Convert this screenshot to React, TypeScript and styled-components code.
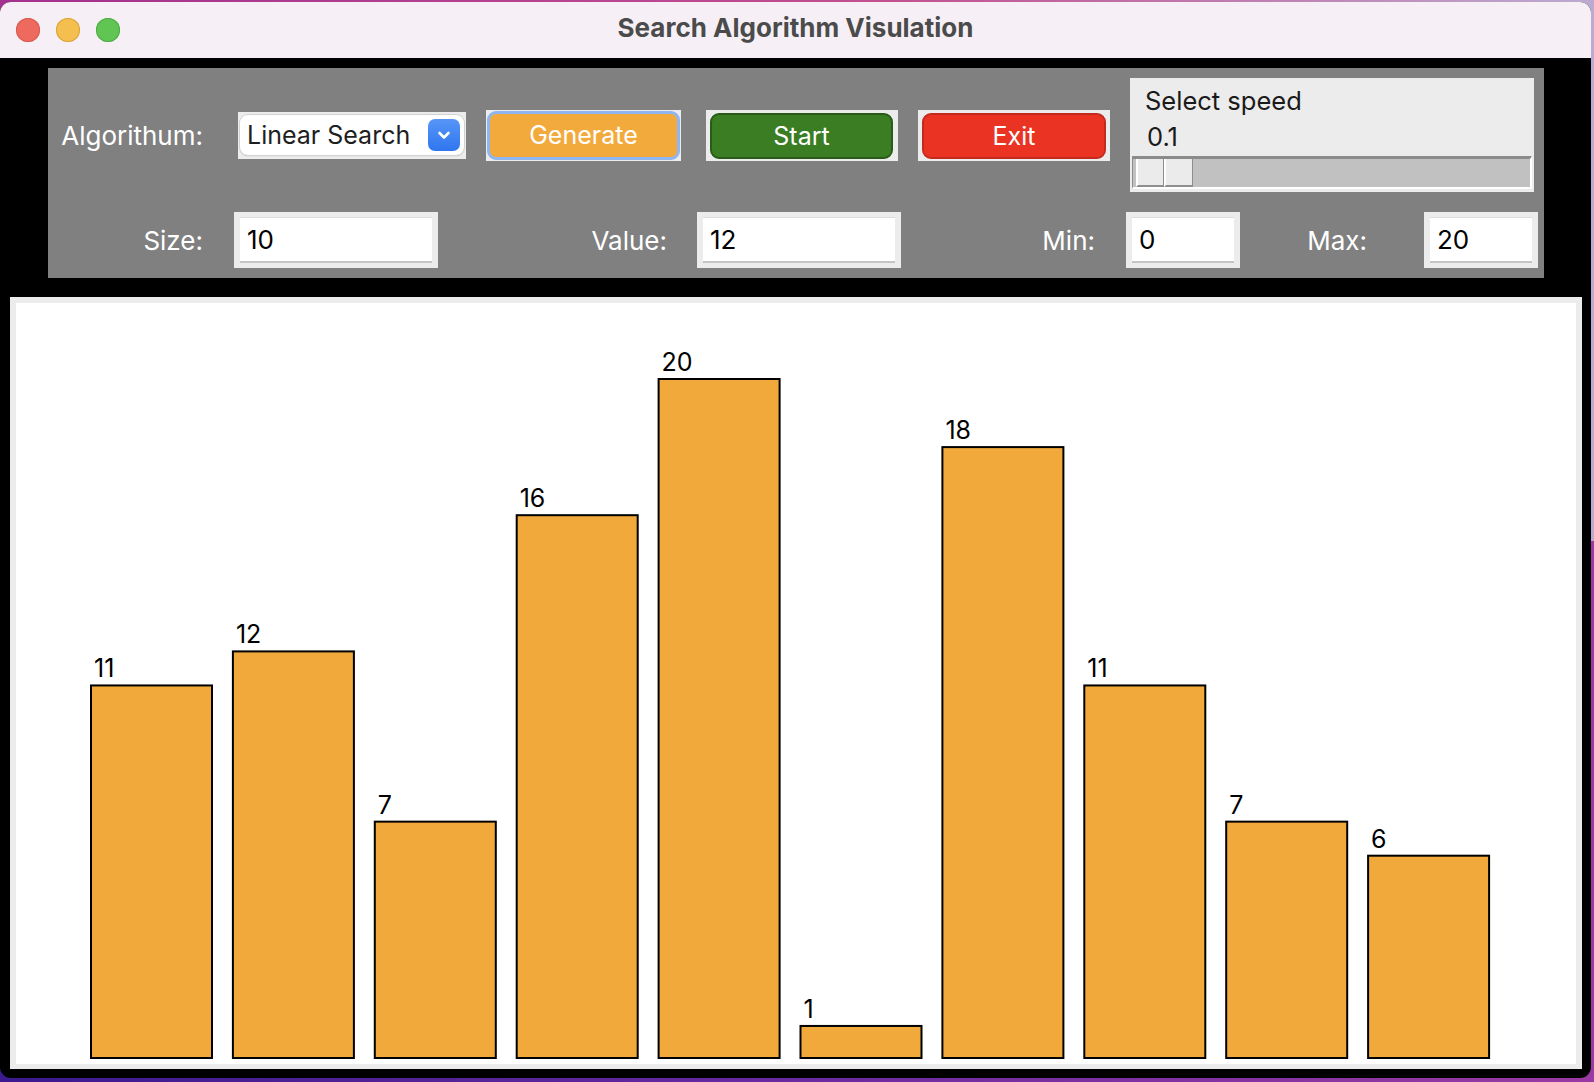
import styled, { createGlobalStyle } from "styled-components";

const VALUES = [11, 12, 7, 16, 20, 1, 18, 11, 7, 6];

const CHART_W = 1560;
const CHART_H = 761;
const BAR_LEFT = 74;
const BAR_STEP = 141.9;
const BAR_W = 123;
const BAR_BASE = 756;
const UNIT = 34.05;

const GlobalStyle = createGlobalStyle`
  html, body {
    margin: 0;
    padding: 0;
  }
  body {
    width: 1594px;
    height: 1082px;
    overflow: hidden;
    font-family: Inter, "Noto Sans", "Liberation Sans", sans-serif;
    background:
      linear-gradient(90deg, #a3318f 0%, #c24f90 55%, #bcaad0 100%) top / 100% 50% no-repeat,
      linear-gradient(90deg, #3a1a8e 0%, #6a2aa0 50%, #9a3aa2 100%) bottom / 100% 50% no-repeat;
  }
`;

const Desktop = styled.div`
  width: 1594px;
  height: 1082px;
  padding-top: 2px;
  box-sizing: border-box;
`;

const Window = styled.div`
  width: 1591px;
  height: 1076px;
  border-radius: 11px;
  overflow: hidden;
  background: #000;
  display: flex;
  flex-direction: column;
`;

const TitleBar = styled.div`
  height: 56px;
  flex: none;
  background: #f6f0f6;
  display: grid;
  grid-template-columns: 1fr auto 1fr;
  align-items: center;
`;

const Lights = styled.div`
  display: flex;
  gap: 16px;
  padding-left: 16px;
`;

const Light = styled.span<{ $fill: string; $edge: string }>`
  width: 24px;
  height: 24px;
  border-radius: 50%;
  background: ${(p) => p.$fill};
  box-shadow: inset 0 0 0 1px ${(p) => p.$edge};
`;

const Title = styled.div`
  font-size: 26px;
  font-weight: 700;
  color: #4b4b4b;
  line-height: 26px;
  padding-bottom: 4px;
`;

const Content = styled.div`
  flex: 1;
  display: flex;
  flex-direction: column;
  gap: 19px;
  padding-top: 10px;
`;

const ControlPanel = styled.div`
  margin-left: 48px;
  width: 1496px;
  height: 210px;
  box-sizing: border-box;
  background: #808080;
  padding: 10px 0;
  display: flex;
  flex-direction: column;
  gap: 20px;
`;

const ControlRow = styled.div<{ $h: number }>`
  height: ${(p) => p.$h}px;
  display: flex;
  align-items: center;
`;

const FieldLabel = styled.span<{ $w: number; $gap: number }>`
  flex: none;
  width: ${(p) => p.$w}px;
  margin-right: ${(p) => p.$gap}px;
  text-align: right;
  color: #fff;
  font-size: 26px;
`;

const ComboFrame = styled.div`
  flex: none;
  width: 228px;
  height: 47px;
  box-sizing: border-box;
  padding: 3px 2px 4px;
  background: #ececec;
  margin-right: 20px;
`;

const ComboBox = styled.div`
  height: 100%;
  display: flex;
  align-items: center;
  background: #fff;
  border-radius: 8px;
  box-shadow: 0 0 0 1px #d2d2d2, 0 1px 1px rgba(0, 0, 0, 0.25);
  padding-left: 7px;
  padding-right: 4px;
  font-size: 25px;
  color: #1e1e1e;
`;

const ComboArrow = styled.span`
  margin-left: auto;
  width: 32px;
  height: 32px;
  border-radius: 7px;
  background: linear-gradient(#5796f7, #2f76ef);
  display: flex;
  align-items: center;
  justify-content: center;
`;

const ButtonFrame = styled.div<{ $w: number; $gap: number; $pad: string }>`
  flex: none;
  width: ${(p) => p.$w}px;
  height: 51px;
  box-sizing: border-box;
  padding: ${(p) => p.$pad};
  background: #ececec;
  margin-right: ${(p) => p.$gap}px;
`;

const ActionButton = styled.button<{ $bg: string; $edge: string; $edgeW: number }>`
  width: 100%;
  height: 100%;
  box-sizing: border-box;
  border: ${(p) => p.$edgeW}px solid ${(p) => p.$edge};
  border-radius: 9px;
  background: ${(p) => p.$bg};
  color: #fff;
  font-family: inherit;
  font-size: 25px;
  padding: 0;
  cursor: pointer;
`;

const SpeedFrame = styled.div`
  flex: none;
  width: 404px;
  height: 114px;
  box-sizing: border-box;
  background: #ececec;
  padding: 7px 2px 3px;
  display: flex;
  flex-direction: column;
  color: #1a1a1a;
  font-size: 25.5px;
`;

const SpeedText = styled.div<{ $indent: number; $top: number }>`
  margin-left: ${(p) => p.$indent}px;
  margin-top: ${(p) => p.$top}px;
  line-height: 32px;
`;

const Trough = styled.div`
  margin-top: 3px;
  height: 33px;
  box-sizing: border-box;
  background: #c1c1c1;
  border-top: 3px solid #8b8b8b;
  border-left: 1px solid #8b8b8b;
  border-right: 2px solid #fff;
  border-bottom: 2px solid #fff;
  display: flex;
  padding-left: 3px;
`;

const HandleHalf = styled.span<{ $w: number }>`
  width: ${(p) => p.$w}px;
  height: 100%;
  box-sizing: border-box;
  background: #ebebeb;
  border-left: 2px solid #fff;
  border-bottom: 2px solid #8e8e8e;
  border-right: 1px solid #8e8e8e;
`;

const EntryFrame = styled.div<{ $w: number }>`
  flex: none;
  width: ${(p) => p.$w}px;
  height: 56px;
  box-sizing: border-box;
  padding: 5px 6px;
  background: #ececec;
`;

const Entry = styled.input`
  display: block;
  width: 100%;
  height: 100%;
  box-sizing: border-box;
  border: none;
  border-top: 1px solid #dcdcdc;
  border-bottom: 2px solid #c4c4c4;
  padding: 0 0 0 7px;
  background: #fff;
  color: #000;
  font-family: inherit;
  font-size: 26px;
  outline: none;
`;

const CanvasFrame = styled.div`
  margin-left: 10px;
  width: 1572px;
  height: 772px;
  box-sizing: border-box;
  padding: 6px 6px 5px;
  background: #ececec;
`;

const Chart = styled.svg`
  display: block;
  background: #fff;
`;

const BarLabel = styled.text`
  font-family: Inter, "Noto Sans", sans-serif;
  font-size: 25px;
  fill: #000;
`;

const Chevron = () => (
  <svg width="16" height="16" viewBox="0 0 16 16">
    <path
      d="M3.5 6 L8 10.5 L12.5 6"
      fill="none"
      stroke="#fff"
      strokeWidth="2.6"
      strokeLinecap="round"
      strokeLinejoin="round"
    />
  </svg>
);

const BarChart = ({ values }: { values: number[] }) => (
  <Chart width={CHART_W} height={CHART_H} viewBox={`0 0 ${CHART_W} ${CHART_H}`}>
    {values.map((v, i) => {
      const x = BAR_LEFT + i * BAR_STEP;
      const h = v * UNIT;
      const top = BAR_BASE - h;
      return (
        <g key={i}>
          <rect
            x={x + 1}
            y={top + 1}
            width={BAR_W - 2}
            height={h - 2}
            fill="#f1a93c"
            stroke="#000"
            strokeWidth={2}
          />
          <BarLabel x={x + 4} y={top - 7}>
            {v}
          </BarLabel>
        </g>
      );
    })}
  </Chart>
);

export default function App() {
  return (
    <>
      <GlobalStyle />
      <Desktop>
        <Window>
          <TitleBar>
            <Lights>
              <Light $fill="#ee6a5f" $edge="#d65b50" />
              <Light $fill="#f5bf4f" $edge="#d8a43b" />
              <Light $fill="#61c554" $edge="#4fab43" />
            </Lights>
            <Title>Search Algorithm Visulation</Title>
            <span />
          </TitleBar>
          <Content>
            <ControlPanel>
              <ControlRow $h={114}>
                <FieldLabel $w={155} $gap={35}>
                  Algorithum:
                </FieldLabel>
                <ComboFrame>
                  <ComboBox>
                    Linear Search
                    <ComboArrow>
                      <Chevron />
                    </ComboArrow>
                  </ComboBox>
                </ComboFrame>
                <ButtonFrame $w={195} $gap={25} $pad="1px">
                  <ActionButton $bg="#f3aa3c" $edge="#8fb6f0" $edgeW={3}>
                    Generate
                  </ActionButton>
                </ButtonFrame>
                <ButtonFrame $w={192} $gap={20} $pad="3px 5px 2px 4px">
                  <ActionButton $bg="#3a7d23" $edge="#2a5c19" $edgeW={2}>
                    Start
                  </ActionButton>
                </ButtonFrame>
                <ButtonFrame $w={192} $gap={20} $pad="3px 4px 2px 4px">
                  <ActionButton $bg="#ea3323" $edge="#c52a1f" $edgeW={2}>
                    Exit
                  </ActionButton>
                </ButtonFrame>
                <SpeedFrame>
                  <SpeedText $indent={13} $top={0}>
                    Select speed
                  </SpeedText>
                  <SpeedText $indent={15} $top={4}>
                    0.1
                  </SpeedText>
                  <Trough>
                    <HandleHalf $w={28} />
                    <HandleHalf $w={29} />
                  </Trough>
                </SpeedFrame>
              </ControlRow>
              <ControlRow $h={56}>
                <FieldLabel $w={155} $gap={31}>
                  Size:
                </FieldLabel>
                <EntryFrame $w={204}>
                  <Entry defaultValue="10" />
                </EntryFrame>
                <FieldLabel $w={229} $gap={30}>
                  Value:
                </FieldLabel>
                <EntryFrame $w={204}>
                  <Entry defaultValue="12" />
                </EntryFrame>
                <FieldLabel $w={194} $gap={31}>
                  Min:
                </FieldLabel>
                <EntryFrame $w={114}>
                  <Entry defaultValue="0" />
                </EntryFrame>
                <FieldLabel $w={127} $gap={57}>
                  Max:
                </FieldLabel>
                <EntryFrame $w={114}>
                  <Entry defaultValue="20" />
                </EntryFrame>
              </ControlRow>
            </ControlPanel>
            <CanvasFrame>
              <BarChart values={VALUES} />
            </CanvasFrame>
          </Content>
        </Window>
      </Desktop>
    </>
  );
}
